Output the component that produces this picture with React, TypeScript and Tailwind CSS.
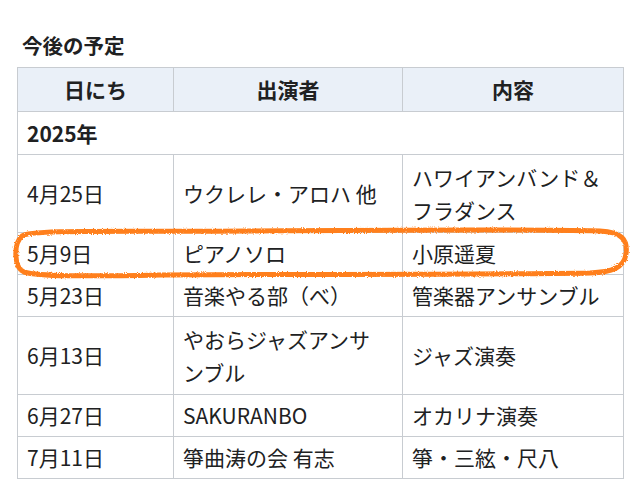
import React from 'react';

type Row = { date: string; who: string[]; what: string[] };

const rows: Row[] = [
  { date: '4月25日', who: ['ウクレレ・アロハ 他'], what: ['ハワイアンバンド＆', 'フラダンス'] },
  { date: '5月9日', who: ['ピアノソロ'], what: ['小原遥夏'] },
  { date: '5月23日', who: ['音楽やる部（べ）'], what: ['管楽器アンサンブル'] },
  { date: '6月13日', who: ['やおらジャズアンサ', 'ンブル'], what: ['ジャズ演奏'] },
  { date: '6月27日', who: ['SAKURANBO'], what: ['オカリナ演奏'] },
  { date: '7月11日', who: ['箏曲涛の会 有志'], what: ['箏・三絃・尺八'] },
];

const cell = 'border border-[#c8ccd1] px-[9px] py-[4px] align-middle';

const App = () => {
  return (
    <div
      className="relative w-[640px] h-[480px] overflow-hidden bg-white text-[#202122]"
      style={{ fontFamily: '"Noto Sans CJK JP", "Noto Sans", sans-serif' }}
    >
      <div className="pl-[22px] pt-[31px]">
        <h2 className="text-[20.5px] font-bold leading-[28px]">今後の予定</h2>
      </div>
      <table className="ml-[17px] mt-[8px] border-collapse text-[21px] leading-[33px] table-fixed w-[606px]">
        <colgroup>
          <col className="w-[156px]" />
          <col className="w-[229px]" />
          <col className="w-[221px]" />
        </colgroup>
        <thead>
          <tr className="bg-[#eaf0f8] h-[44px]">
            <th className={`${cell} text-center font-bold`}>日にち</th>
            <th className={`${cell} text-center font-bold`}>出演者</th>
            <th className={`${cell} text-center font-bold`}>内容</th>
          </tr>
        </thead>
        <tbody>
          <tr className="h-[43px]">
            <td colSpan={3} className={`${cell} font-bold`}>2025年</td>
          </tr>
          {rows.map(r => {
            const lines = Math.max(r.who.length, r.what.length);
            return (
              <tr key={r.date} className={lines > 1 ? 'h-[78px]' : 'h-[42px]'}>
                <td className={cell}>{r.date}</td>
                <td className={`${cell} whitespace-pre`}>
                  {r.who.map(t => <div key={t}>{t}</div>)}
                </td>
                <td className={cell}>
                  {r.what.map(t => <div key={t}>{t}</div>)}
                </td>
              </tr>
            );
          })}
        </tbody>
      </table>

      {/* hand-drawn highlight around 5/9 row */}
      <svg className="absolute left-0 top-0 pointer-events-none" width="640" height="480">
        <defs>
          <filter id="rough" x="-5%" y="-20%" width="110%" height="140%">
            <feTurbulence type="fractalNoise" baseFrequency="0.9" numOctaves="2" seed="3" />
            <feDisplacementMap in="SourceGraphic" scale="3" />
          </filter>
        </defs>
        <path
          d="M22 236 C 30 229, 120 232, 250 231 C 380 230, 520 229, 600 231 C 622 232, 628 240, 626 254 C 624 268, 612 272, 590 273 C 470 275, 300 274, 160 275 C 90 276, 40 277, 24 272 C 14 268, 13 244, 22 236 Z"
          fill="none"
          stroke="#ff7f1a"
          strokeWidth="5"
          strokeLinecap="round"
          strokeLinejoin="round"
          filter="url(#rough)"
        />
      </svg>
    </div>
  );
};

export default App;
